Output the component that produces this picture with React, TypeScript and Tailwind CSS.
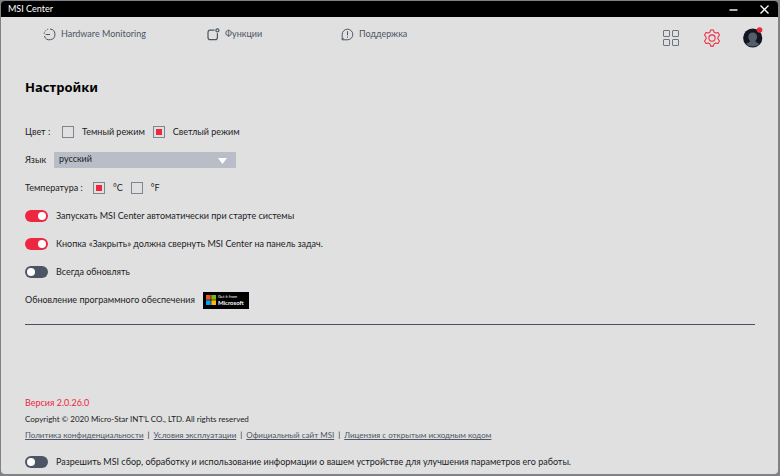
import { useState } from 'react';
import type { ReactNode } from 'react';

function Toggle({ id, label, initial, className = 'h-7' }: { id: string; label: string; initial: boolean; className?: string }) {
  const [on, setOn] = useState(initial);
  return (
    <div className={`flex items-center gap-2 ${className}`}>
      <input
        id={id}
        type="checkbox"
        role="switch"
        checked={on}
        onChange={() => setOn(!on)}
        className="h-3 w-[23px] shrink-0 appearance-none rounded-full bg-[#4b5563] p-[2px] before:block before:size-2 before:rounded-full before:bg-white checked:bg-[#ee2740] checked:before:ml-[11px]"
      />
      <label htmlFor={id}>{label}</label>
    </div>
  );
}

function Choice({ name, label, initial }: { name: string; label: string; initial?: boolean }) {
  const id = `${name}-${label}`;
  return (
    <>
      <input
        id={id}
        type="radio"
        name={name}
        defaultChecked={initial}
        className="size-3 shrink-0 appearance-none border border-[#7d8590] p-[2px] before:block before:size-[6px] checked:before:bg-[#ee2740]"
      />
      <label htmlFor={id} className="ml-2">{label}</label>
    </>
  );
}

function NavButton({ icon, children, className }: { icon: ReactNode; children: ReactNode; className: string }) {
  return (
    <button type="button" className={`flex items-center gap-[5px] text-left ${className}`}>
      {icon}
      {children}
    </button>
  );
}

function MonitorIcon() {
  return (
    <svg width="13" height="13" viewBox="0 0 13 13" fill="none" stroke="currentColor" strokeWidth="1">
      <path d="M7 1a5.4 5.4 0 1 1-5.6 7" />
      <path d="M1.1 5.8A5.4 5.4 0 0 1 5.6 1.1" strokeDasharray="1.4 1.1" />
      <path d="M2.6 6.5H7" />
    </svg>
  );
}

function FeaturesIcon() {
  return (
    <svg width="13" height="13" viewBox="0 0 13 13" fill="none" stroke="currentColor" strokeWidth="1.2">
      <path d="M7.6 2.2H3.2Q1 2.2 1 4.4v5Q1 11.6 3.2 11.6h5q2.2 0 2.2-2.2V5.2" />
      <circle cx="10.4" cy="2.4" r="1.5" />
    </svg>
  );
}

function SupportIcon() {
  return (
    <svg width="13" height="13" viewBox="0 0 13 13" fill="none" stroke="currentColor" strokeWidth="1">
      <path d="M1.2 11.8V6.4a5.3 5.3 0 1 1 5.3 5.4H1.2L2.6 10" />
      <path d="M6.5 3.2v4.2M6.5 8.6v1.1" />
    </svg>
  );
}

function GridIcon() {
  return (
    <svg width="16" height="16" viewBox="0 0 16 16" fill="none" stroke="#6b7380" strokeWidth="1">
      <rect x=".5" y=".5" width="6" height="6" rx=".5" />
      <rect x="9.5" y=".5" width="6" height="6" rx=".5" />
      <rect x=".5" y="9.5" width="6" height="6" rx=".5" />
      <rect x="9.5" y="9.5" width="6" height="6" rx=".5" />
    </svg>
  );
}

function GearIcon() {
  return (
    <svg width="18" height="18" viewBox="0 0 24 24" fill="none" stroke="#ee2740" strokeWidth="1.4" strokeLinejoin="round">
      <path d="M10.2 1.2h3.6l1 3 2 1.2 3.2-.7 2 3.3-2 2.6v2.8l2 2.6-2 3.3-3.2-.7-2 1.2-1 3h-3.6l-1-3-2-1.2-3.200.7-2-3.300 2-2.600v-2.800L2 8l2-3.300 3.200.7 2-1.200z" />
      <circle cx="12" cy="12" r="4.2" />
    </svg>
  );
}

function Avatar() {
  return (
    <svg width="20" height="22" viewBox="0 0 20 22">
      <circle cx="9.7" cy="12" r="9.6" fill="#111621" />
      <path d="M9.7 6.5c-2.8 0-4.4 1.8-4.4 4.3 0 1.9.7 3.2 1.8 4.1-.2 1.3-2.1 1.5-4 3a9.6 9.6 0 0 0 13.2 0c-1.9-1.5-3.8-1.7-4-3 1.1-.9 1.8-2.2 1.8-4.1 0-2.5-1.6-4.3-4.4-4.3z" fill="#535d6b" />
      <circle cx="16.6" cy="4" r="2.8" fill="#ee2740" />
    </svg>
  );
}

const links = [
  'Политика конфиденциальности',
  'Условия эксплуатации',
  'Официальный сайт MSI',
  'Лицензия с открытым исходным кодом',
];

export default function App() {
  return (
    <div className="flex min-h-screen flex-col bg-[#808285] pt-px pr-[2px] pb-[2px] pl-px font-[Lato,'Noto_Sans',sans-serif] text-[9px] leading-3 text-[#1c1c1f]">
      <header className="flex h-4 items-center justify-between rounded-t bg-black pr-[9px] pl-[7px] text-white">
        <span>MSI Center</span>
        <div className="flex items-center gap-[22px]">
          <button type="button" aria-label="Свернуть">
            <svg width="9" height="9" viewBox="0 0 9 9" stroke="white" strokeWidth="1.4">
              <path d="M0.5 5h8" />
            </svg>
          </button>
          <button type="button" aria-label="Закрыть">
            <svg width="9" height="9" viewBox="0 0 9 9" stroke="white" strokeWidth="1.3">
              <path d="M.5 .5l8 8M8.5 .5l-8 8" />
            </svg>
          </button>
        </div>
      </header>

      <div className="flex flex-1 flex-col rounded-b bg-[#e0e0e0] pr-[23px] pl-6">
        <nav className="flex h-[42px] items-center justify-between pl-[18px] text-[#4b5563]">
          <div className="flex pb-2">
            <NavButton className="w-[164px]" icon={<MonitorIcon />}>Hardware Monitoring</NavButton>
            <NavButton className="w-[134px]" icon={<FeaturesIcon />}>Функции</NavButton>
            <NavButton className="" icon={<SupportIcon />}>Поддержка</NavButton>
          </div>
          <div className="-mr-2 flex items-center gap-6">
            <button type="button" aria-label="Обзор"><GridIcon /></button>
            <button type="button" aria-label="Настройки"><GearIcon /></button>
            <button type="button" aria-label="Профиль" className="-ml-[2px] pb-[2px]"><Avatar /></button>
          </div>
        </nav>

        <main>
          <h1 className="pt-[19px] pb-[22px] font-['Noto_Sans',sans-serif] text-[13px] leading-[18px] font-bold text-black">Настройки</h1>
          <fieldset className="flex h-7 items-center">
            <span className="w-[37px]">Цвет :</span>
            <Choice name="theme" label="Темный режим" />
            <span className="w-2" />
            <Choice name="theme" label="Светлый режим" initial />
          </fieldset>
          <div className="flex h-7 items-center">
            <label htmlFor="language" className="w-[29px]">Язык</label>
            <div className="relative">
              <select id="language" className="block h-4 w-[182px] appearance-none bg-[#b9bdc8] pb-[2px] pl-[5px] leading-3">
                <option>русский</option>
              </select>
              <svg className="pointer-events-none absolute top-[6px] right-[9px]" width="9" height="6" viewBox="0 0 9 6">
                <path d="M0 0h9L4.5 6z" fill="white" />
              </svg>
            </div>
          </div>
          <fieldset className="flex h-7 items-center">
            <span className="w-[68px]">Температура :</span>
            <Choice name="temperature" label="°C" initial />
            <span className="w-2" />
            <Choice name="temperature" label="°F" />
          </fieldset>
          <Toggle id="autostart" label="Запускать MSI Center автоматически при старте системы" initial />
          <Toggle id="minimize" label="Кнопка «Закрыть» должна свернуть MSI Center на панель задач." initial />
          <Toggle id="update" label="Всегда обновлять" initial={false} />
          <div className="flex h-7 items-center gap-2">
            <span>Обновление программного обеспечения</span>
            <button type="button" className="flex h-[17px] w-[46px] items-center gap-[2px] bg-black pl-[3px] text-left text-white">
              <svg width="10" height="10" viewBox="0 0 10 10">
                <path d="M0 0h4.7v4.7H0z" fill="#f25022" />
                <path d="M5.3 0H10v4.7H5.3z" fill="#7fba00" />
                <path d="M0 5.3h4.7V10H0z" fill="#00a4ef" />
                <path d="M5.3 5.3H10V10H5.3z" fill="#ffb900" />
              </svg>
              <span className="flex flex-col">
                <span className="text-[4px] leading-[5px]">Get it from</span>
                <span className="text-[6px] leading-[7px] font-bold">Microsoft</span>
              </span>
            </button>
          </div>
          <hr className="mt-[10px] border-t border-[#4b4f66]" />
        </main>

        <footer className="mt-auto">
          <p className="text-[#ee2740]">Версия 2.0.26.0</p>
          <p className="mt-1 text-[8px]">Copyright © 2020 Micro-Star INT'L CO., LTD. All rights reserved</p>
          <ul className="mt-1 mb-[9px] flex text-[8px] text-[#4b5563]">
            {links.map((link, i) => (
              <li key={link}>
                {i > 0 && <span className="mx-1 text-[#1c1c1f]">|</span>}
                <a href="#" className="underline">{link}</a>
              </li>
            ))}
          </ul>
          <Toggle id="consent" className="h-6" label="Разрешить MSI сбор, обработку и использование информации о вашем устройстве для улучшения параметров его работы." initial={false} />
        </footer>
      </div>
    </div>
  );
}
